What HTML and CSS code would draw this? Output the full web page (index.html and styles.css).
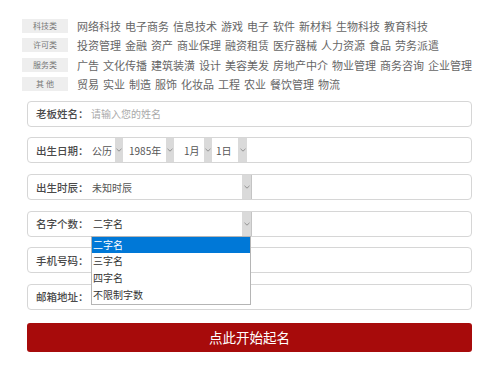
FILE: index.html
```html
<!DOCTYPE html>
<html lang="zh-CN">
<head>
<meta charset="utf-8">
<title>起名</title>
<link rel="stylesheet" href="styles.css">
</head>
<body>
<div class="page">
  <div class="cats">
    <div class="cat-row">
      <span class="tag">科技类</span>
      <ul class="words"><li>网络科技</li><li>电子商务</li><li>信息技术</li><li>游戏</li><li>电子</li><li>软件</li><li>新材料</li><li>生物科技</li><li>教育科技</li></ul>
    </div>
    <div class="cat-row">
      <span class="tag">许可类</span>
      <ul class="words"><li>投资管理</li><li>金融</li><li>资产</li><li>商业保理</li><li>融资租赁</li><li>医疗器械</li><li>人力资源</li><li>食品</li><li>劳务派遣</li></ul>
    </div>
    <div class="cat-row">
      <span class="tag">服务类</span>
      <ul class="words"><li>广告</li><li>文化传播</li><li>建筑装潢</li><li>设计</li><li>美容美发</li><li>房地产中介</li><li>物业管理</li><li>商务咨询</li><li>企业管理</li></ul>
    </div>
    <div class="cat-row">
      <span class="tag">其 他</span>
      <ul class="words"><li>贸易</li><li>实业</li><li>制造</li><li>服饰</li><li>化妆品</li><li>工程</li><li>农业</li><li>餐饮管理</li><li>物流</li></ul>
    </div>
  </div>

  <div class="form">
    <div class="field">
      <span class="label">老板姓名：</span>
      <span class="placeholder">请输入您的姓名</span>
    </div>
    <div class="field">
      <span class="label">出生日期：</span>
      <div class="sel s1"><span class="sel-text">公历</span><span class="arrow"><svg viewBox="0 0 6 4" width="6" height="4"><path d="M0.5 0.8 L3 3.2 L5.5 0.8" fill="none" stroke="#8a8a8a" stroke-width="0.9"/></svg></span></div>
      <div class="sel s2"><span class="sel-text">1985年</span><span class="arrow"><svg viewBox="0 0 6 4" width="6" height="4"><path d="M0.5 0.8 L3 3.2 L5.5 0.8" fill="none" stroke="#8a8a8a" stroke-width="0.9"/></svg></span></div>
      <div class="sel s3"><span class="sel-text">1月</span><span class="arrow"><svg viewBox="0 0 6 4" width="6" height="4"><path d="M0.5 0.8 L3 3.2 L5.5 0.8" fill="none" stroke="#8a8a8a" stroke-width="0.9"/></svg></span></div>
      <div class="sel s4"><span class="sel-text">1日</span><span class="arrow"><svg viewBox="0 0 6 4" width="6" height="4"><path d="M0.5 0.8 L3 3.2 L5.5 0.8" fill="none" stroke="#8a8a8a" stroke-width="0.9"/></svg></span></div>
    </div>
    <div class="field">
      <span class="label">出生时辰：</span>
      <div class="sel wide"><span class="sel-text">未知时辰</span><span class="arrow"><svg viewBox="0 0 6 4" width="6" height="4"><path d="M0.5 0.8 L3 3.2 L5.5 0.8" fill="none" stroke="#8a8a8a" stroke-width="0.9"/></svg></span></div>
    </div>
    <div class="field menu-host">
      <span class="label">名字个数：</span>
      <div class="sel wide"><span class="sel-text dark">二字名</span><span class="arrow"><svg viewBox="0 0 6 4" width="6" height="4"><path d="M0.5 0.8 L3 3.2 L5.5 0.8" fill="none" stroke="#8a8a8a" stroke-width="0.9"/></svg></span></div>
      <ul class="menu">
        <li class="active">二字名</li>
        <li>三字名</li>
        <li>四字名</li>
        <li>不限制字数</li>
      </ul>
    </div>
    <div class="field">
      <span class="label">手机号码：</span>
    </div>
    <div class="field">
      <span class="label">邮箱地址：</span>
    </div>
    <button class="submit" type="button">点此开始起名</button>
  </div>
</div>
</body>
</html>
```

FILE: styles.css
```css
* { box-sizing: border-box; }
html, body {
  margin: 0;
  padding: 0;
  background: #fff;
}
body {
  width: 500px;
  height: 366px;
  overflow: hidden;
  font-family: "Noto Sans CJK SC", "Noto Sans", sans-serif;
}
.page {
  padding-top: 19px;
}
.cats {
  padding-left: 22px;
  display: flex;
  flex-direction: column;
  gap: 5.3px;
}
.cat-row {
  display: flex;
  align-items: center;
  height: 14px;
}
.tag {
  width: 46px;
  height: 14px;
  background: #eeeeee;
  color: #777;
  font-size: 8px;
  line-height: 14px;
  text-align: center;
  white-space: pre;
  margin-right: 9px;
}
.words {
  display: flex;
  gap: 4px;
  list-style: none;
  margin: 0;
  padding: 0;
}
.words li {
  font-size: 11px;
  line-height: 14px;
  color: #666;
  white-space: nowrap;
}
.form {
  margin: 10px 28px 0 27px;
  display: flex;
  flex-direction: column;
  gap: 10.6px;
}
.field {
  position: relative;
  display: flex;
  align-items: stretch;
  height: 26px;
  border: 1px solid #d6d6d6;
  border-radius: 4px;
  background: #fff;
}
.label {
  width: 63px;
  padding-left: 8px;
  display: flex;
  align-items: center;
  font-size: 10.5px;
  font-weight: 500;
  color: #4a4a4a;
  white-space: nowrap;
}
.placeholder {
  display: flex;
  align-items: center;
  font-size: 10px;
  color: #aaa;
}
.sel {
  display: flex;
  align-items: stretch;
  justify-content: space-between;
}
.sel-text {
  display: flex;
  align-items: center;
  font-size: 10px;
  color: #555;
  white-space: nowrap;
}
.sel-text.dark { color: #333; padding-left: 1px; }
.arrow {
  width: 8px;
  background: #dadada;
  display: flex;
  align-items: center;
  justify-content: center;
}
.arrow svg { display: block; }
.s1 { width: 32px; padding-left: 1px; }
.s2 { width: 51px; padding-left: 6px; }
.s3 { width: 38px; padding-left: 10px; }
.s4 { width: 35px; padding-left: 4px; }
.s4 .arrow { width: 9px; }
.wide {
  width: 161px;
  padding-left: 1px;
  border-right: 1px solid #c4c4c4;
}
.wide .arrow { width: 9px; }
.menu {
  position: absolute;
  left: 63px;
  top: 24px;
  width: 160px;
  margin: 0;
  padding: 0;
  list-style: none;
  background: #fff;
  border: 1px solid #b5b5b5;
  z-index: 5;
}
.menu li {
  height: 16.75px;
  line-height: 16.75px;
  padding-left: 1px;
  font-size: 10px;
  color: #333;
  white-space: nowrap;
}
.menu li.active {
  background: #0078d7;
  color: #fff;
}
.submit {
  margin-top: 2.4px;
  height: 29px;
  border: none;
  border-radius: 3px;
  background: #a70b0b;
  color: #fff;
  font-family: "Noto Sans CJK SC", "Noto Sans", sans-serif;
  font-size: 13.5px;
  padding: 0;
  cursor: pointer;
}
```
